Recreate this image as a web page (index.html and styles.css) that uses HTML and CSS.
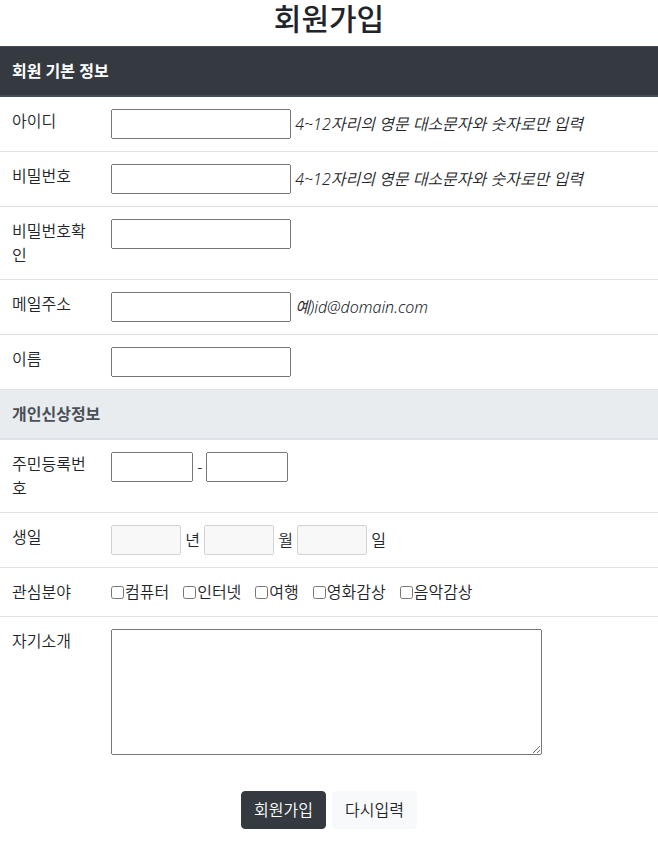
FILE: index.html
```html
<!DOCTYPE html>
<html lang="ko">
<head>
  <meta charset="UTF-8" />
  <meta name="viewport" content="width=device-width, initial-scale=1" />
  <title>회원가입</title>
  <link rel="stylesheet" href="styles.css">
</head>
<body>

  <h1>회원가입</h1>

  <form id="joinForm">
    <table class="join-table">
      <colgroup>
        <col class="col-label" />
        <col />
      </colgroup>
      <thead class="head-dark">
        <tr><th colspan="2">회원 기본 정보</th></tr>
      </thead>
      <tbody>
        <tr>
          <td>아이디</td>
          <td><input type="text" class="field" /> <i class="hint">4~12자리의 영문 대소문자와 숫자로만 입력</i></td>
        </tr>
        <tr>
          <td>비밀번호</td>
          <td><input type="password" class="field" /> <i class="hint">4~12자리의 영문 대소문자와 숫자로만 입력</i></td>
        </tr>
        <tr>
          <td>비밀번호확인</td>
          <td><input type="password" class="field" /></td>
        </tr>
        <tr>
          <td>메일주소</td>
          <td><input type="email" class="field" /> <i class="hint">예)id@domain.com</i></td>
        </tr>
        <tr>
          <td>이름</td>
          <td><input type="text" class="field" /></td>
        </tr>
      </tbody>
      <thead class="head-light">
        <tr><th colspan="2">개인신상정보</th></tr>
      </thead>
      <tbody>
        <tr>
          <td>주민등록번호</td>
          <td><input type="text" class="field short" /> - <input type="password" class="field short" /></td>
        </tr>
        <tr>
          <td>생일</td>
          <td><input type="text" class="field tiny" disabled /> 년 <input type="text" class="field tiny" disabled /> 월 <input type="text" class="field tiny" disabled /> 일</td>
        </tr>
        <tr>
          <td>관심분야</td>
          <td>
            <div class="checks">
              <label><input type="checkbox" />컴퓨터</label>
              <label><input type="checkbox" />인터넷</label>
              <label><input type="checkbox" />여행</label>
              <label><input type="checkbox" />영화감상</label>
              <label><input type="checkbox" />음악감상</label>
            </div>
          </td>
        </tr>
        <tr>
          <td>자기소개</td>
          <td><textarea class="intro"></textarea></td>
        </tr>
      </tbody>
    </table>

    <div class="buttons">
      <button type="submit" class="btn btn-dark">회원가입</button>
      <button type="reset" class="btn btn-light">다시입력</button>
    </div>
  </form>

</body>
</html>
```

FILE: styles.css
```css
* {
  box-sizing: border-box;
}
body {
  margin: 0;
  font-family: "Noto Sans", "Noto Sans CJK KR", sans-serif;
  font-size: 16px;
  font-weight: 350;
  line-height: 1.5;
  color: #212529;
  background: #fff;
}
h1 {
  margin: 0 0 8px;
  font-size: 30px;
  font-weight: 500;
  line-height: 38px;
  text-align: center;
}
.join-table {
  width: 100%;
  border-collapse: collapse;
  table-layout: fixed;
}
.col-label {
  width: 99px;
}
.join-table th,
.join-table td {
  padding: 12px;
  vertical-align: top;
  text-align: left;
  border-top: 1px solid #dee2e6;
}
.join-table td:first-child {
  padding-right: 5px;
}
.join-table th {
  font-weight: bold;
  border-bottom: 2px solid #dee2e6;
}
.head-dark th {
  color: #fff;
  background-color: #343a40;
  border-color: #454d55;
}
.head-light th {
  color: #495057;
  background-color: #e9ecef;
}
.field {
  width: 180px;
  height: 30px;
  font: inherit;
  vertical-align: baseline;
}
.field.short {
  width: 82px;
}
.field.tiny {
  width: 70px;
}
.hint {
  font-style: italic;
}
.checks {
  display: flex;
  gap: 14px;
}
.checks label {
  display: flex;
  align-items: center;
}
.checks input {
  margin: 0 1px 0 0;
}
.intro {
  display: block;
  width: 431px;
  height: 126px;
  font: inherit;
  resize: vertical;
}
.buttons {
  display: flex;
  justify-content: center;
  gap: 6px;
  margin-top: 24px;
}
.btn {
  padding: 6px 12px;
  font: inherit;
  line-height: 1.5;
  border: 1px solid transparent;
  border-radius: 4px;
  cursor: pointer;
}
.btn-dark {
  color: #fff;
  background-color: #343a40;
  border-color: #343a40;
}
.btn-light {
  color: #212529;
  background-color: #f8f9fa;
  border-color: #f8f9fa;
}
```
